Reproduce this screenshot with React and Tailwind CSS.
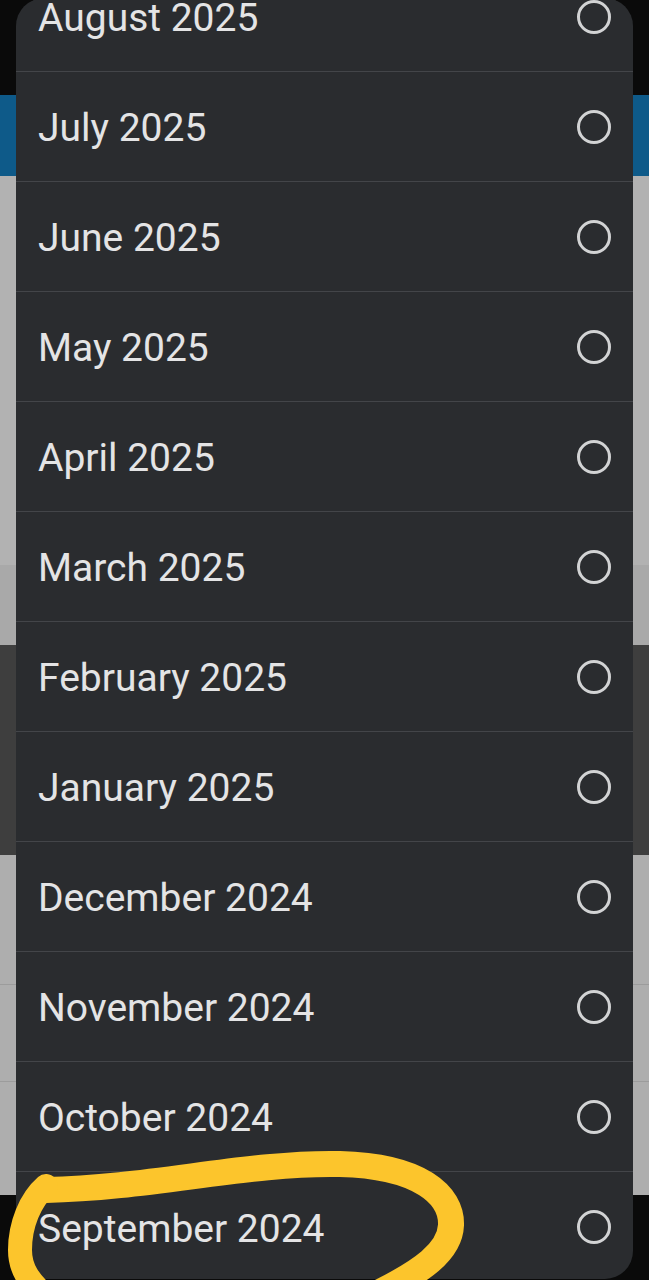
import React from "react";

const months = [
  "August 2025",
  "July 2025",
  "June 2025",
  "May 2025",
  "April 2025",
  "March 2025",
  "February 2025",
  "January 2025",
  "December 2024",
  "November 2024",
  "October 2024",
  "September 2024",
];

const Radio = () => (
  <span className="block w-[34px] h-[34px] rounded-full border-[3px] border-[#d2d3d4]" />
);

const App = () => {
  return (
    <div
      className="relative w-[649px] h-[1280px] overflow-hidden bg-[#0a0a0a]"
      style={{ fontFamily: "Roboto, 'Noto Sans', sans-serif" }}
    >
      {/* page behind the dialog, dimmed */}
      <div className="flex flex-col">
        <div className="h-[95px] bg-[#0a0a0a]" />
        <div className="h-[81px] bg-[#0e5a89]" />
        <div className="h-[389px] bg-[#b2b2b2]" />
        <div className="h-[80px] bg-[#a9a9a9]" />
        <div className="h-[210px] bg-[#3e3e3e]" />
        <div className="h-[130px] bg-[#aeaeae] border-b border-[#9c9c9c]" />
        <div className="h-[97px] bg-[#aeaeae] border-b border-[#9c9c9c]" />
        <div className="h-[113px] bg-[#aeaeae]" />
        <div className="h-[83px] bg-[#0a0a0a]" />
      </div>

      {/* month picker dialog */}
      <div className="absolute left-[16px] top-[-2px] w-[617px] h-[1281px] rounded-[28px] bg-[#2a2c2f] overflow-hidden">
        <div className="mt-[-36px] flex flex-col">
          {months.map((m, i) => (
            <div
              key={m}
              className={
                "h-[110px] shrink-0 flex items-center justify-between pl-[22px] pr-[22px] " +
                (i < months.length - 1 ? "border-b border-[#434549]" : "")
              }
            >
              <span className="pt-[4px] text-[39px] leading-none text-[#e4e4e5]">{m}</span>
              <Radio />
            </div>
          ))}
        </div>
      </div>

      {/* yellow marker scribble */}
      <svg
        className="absolute left-0 top-0 pointer-events-none"
        width="649"
        height="1280"
        viewBox="0 0 649 1280"
      >
        <g fill="none" stroke="#fcc52c" strokeLinecap="round" strokeLinejoin="round">
          <path
            d="M46 1190 C150 1188, 250 1162, 340 1164 C420 1166, 452 1195, 451 1225 C450 1252, 420 1272, 380 1292"
            strokeWidth="26"
          />
          <path
            d="M46 1186 C30 1200, 20 1225, 20 1250 C20 1270, 30 1282, 45 1296"
            strokeWidth="24"
          />
          <path d="M46 1180 L46 1200" strokeWidth="10" strokeLinecap="butt" />
        </g>
      </svg>
    </div>
  );
};

export default App;
